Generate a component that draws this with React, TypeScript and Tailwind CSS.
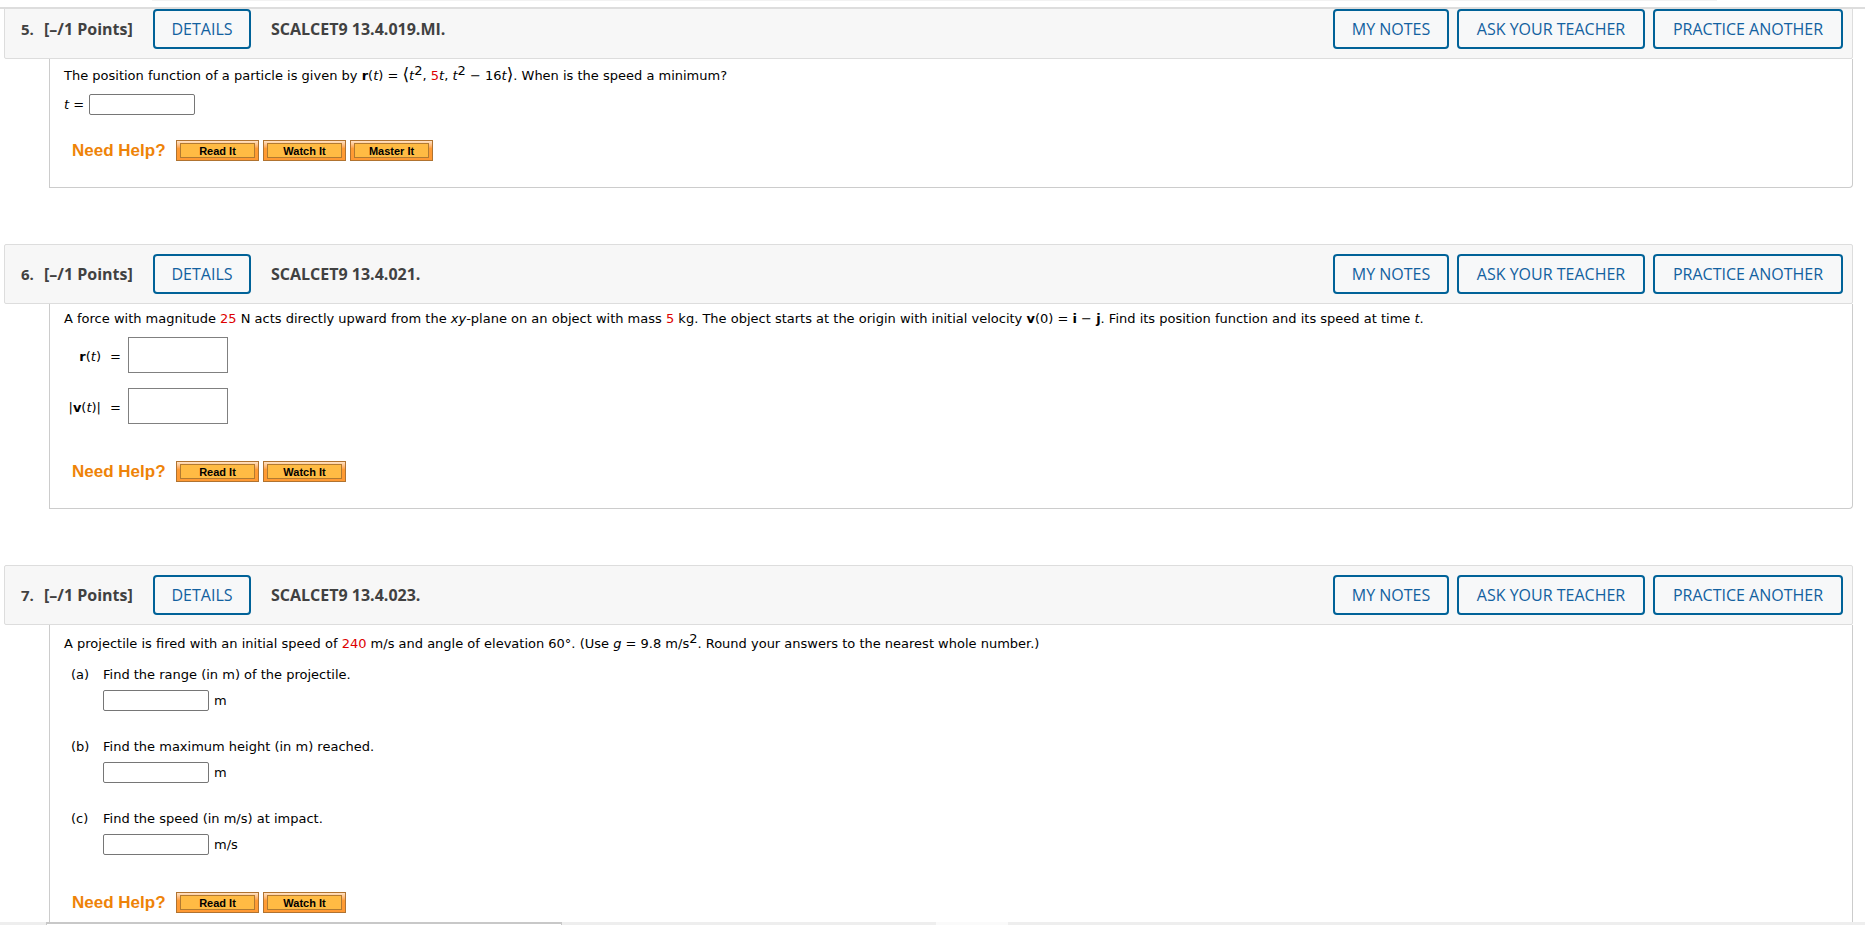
import type { ReactNode } from "react";
import clsx from "clsx";

const BODY_FONT = "font-['Verdana','DejaVu_Sans',sans-serif]";
const UI_FONT = "font-['Open_Sans','Noto_Sans',sans-serif]";

function OutlineButton({ className, children }: { className: string; children: ReactNode }) {
  return (
    <button
      type="button"
      className={clsx("h-10 rounded border-2 border-[#006298] bg-[#f7f8f9] text-[#1261a0] text-base font-medium whitespace-nowrap", className)}
    >
      {children}
    </button>
  );
}

function HelpButton({ children }: { children: ReactNode }) {
  return (
    <button
      type="button"
      className="w-[83px] h-[21px] px-[3px] py-[2px] border border-[#b07330] bg-linear-to-b from-[#ffe2c4] via-[#ff9c34] via-40% to-[#ff9933]"
    >
      <span className="flex items-center justify-center h-[15px] pt-px border border-[#b27a30] bg-[#ffbb44] text-[11px] leading-3 font-bold text-black font-['Liberation_Sans',Arial,sans-serif]">
        {children}
      </span>
    </button>
  );
}

function NeedHelp({ items }: { items: string[] }) {
  return (
    <div className="flex items-center gap-1 pl-2 pb-[26px]">
      <span className="w-[100px] text-[17px] leading-5 font-bold text-[#ee8308] font-['Liberation_Sans',Arial,sans-serif]">Need Help?</span>
      {items.map((item) => (
        <HelpButton key={item}>{item}</HelpButton>
      ))}
    </div>
  );
}

function AnswerInput({ label }: { label: string }) {
  return <input type="text" aria-label={label} className="w-[106px] h-[21px] px-0.5 rounded-[2px] border border-[#767676] bg-white" />;
}

function MathInput({ id }: { id: string }) {
  return <input id={id} type="text" className="w-[100px] h-9 px-1 border border-[#808080] bg-white" />;
}

function Rand({ children }: { children: ReactNode }) {
  return <span className="text-[#dd0000]">{children}</span>;
}

function Sup({ children }: { children: ReactNode }) {
  return <sup className="text-[13px] leading-none -top-[5px]">{children}</sup>;
}

function Angle({ children }: { children: ReactNode }) {
  return <span className="text-[17px] leading-none">{children}</span>;
}

function Question({ number, code, children }: { number: number; code: string; children: ReactNode }) {
  return (
    <section className="mb-14">
      <header className={clsx("flex items-center h-15 pl-4 pr-[9px] border border-[#dddddd] rounded-[2px] bg-[#f7f7f7] text-[#414141]", UI_FONT)}>
        <span className="w-[23px] text-[15px] font-bold">{number}.</span>
        <span className="w-[109px] text-base font-bold">[–/1 Points]</span>
        <OutlineButton className="w-[98px]">DETAILS</OutlineButton>
        <h2 className="ml-5 text-base font-bold">{code}</h2>
        <div className="flex gap-2 ml-auto">
          <OutlineButton className="w-[116px]">MY NOTES</OutlineButton>
          <OutlineButton className="w-[188px]">ASK YOUR TEACHER</OutlineButton>
          <OutlineButton className="w-[190px]">PRACTICE ANOTHER</OutlineButton>
        </div>
      </header>
      <div className={clsx("ml-[45px] pl-[14px] border border-t-0 border-[#cccccc] rounded-br text-[13px] leading-5 text-black", BODY_FONT)}>
        {children}
      </div>
    </section>
  );
}

const PARTS = [
  { key: "a", text: "Find the range (in m) of the projectile.", unit: "m" },
  { key: "b", text: "Find the maximum height (in m) reached.", unit: "m" },
  { key: "c", text: "Find the speed (in m/s) at impact.", unit: "m/s" },
];

export default function App() {
  return (
    <div className="flex flex-col h-screen overflow-hidden bg-white">
      <div className="shrink-0 h-[9px] border-b-2 border-[#dddddd]">
        <div className="h-px ml-[152px] mr-[148px] bg-[#f2f2f2]" />
      </div>

      <main className="flex-1 min-h-0 overflow-hidden pl-1 pr-3">
        <div className="-mt-2.5">
          <Question number={5} code="SCALCET9 13.4.019.MI.">
            <p className="pt-[7px]">
              The position function of a particle is given by <b>r</b>(<i>t</i>) = <Angle>⟨</Angle>
              <i>t</i>
              <Sup>2</Sup>, <Rand>5</Rand>
              <i>t</i>, <i>t</i>
              <Sup>2</Sup> − 16<i>t</i>
              <Angle>⟩</Angle>. When is the speed a minimum?
            </p>
            <div className="flex items-center gap-[5px] mt-2 mb-[25px]">
              <span><i>t</i> =</span>
              <AnswerInput label="t" />
            </div>
            <NeedHelp items={["Read It", "Watch It", "Master It"]} />
          </Question>

          <Question number={6} code="SCALCET9 13.4.021.">
            <p className="pt-[5px]">
              A force with magnitude <Rand>25</Rand> N acts directly upward from the <i>xy</i>-plane on an object with mass <Rand>5</Rand> kg. The object starts at the origin with initial velocity <b>v</b>(0) = <b>i</b> − <b>j</b>. Find its position function and its speed at time <i>t</i>.
            </p>
            <div className="grid grid-cols-[37px_27px_auto] items-center justify-start gap-y-[15px] mt-2 mb-[37px]">
              <label htmlFor="position" className="pt-1 text-right"><b>r</b>(<i>t</i>)</label>
              <span className="pt-1 pl-[9px]">=</span>
              <MathInput id="position" />
              <label htmlFor="speed" className="pt-1 text-right">|<b>v</b>(<i>t</i>)|</label>
              <span className="pt-1 pl-[9px]">=</span>
              <MathInput id="speed" />
            </div>
            <NeedHelp items={["Read It", "Watch It"]} />
          </Question>

          <Question number={7} code="SCALCET9 13.4.023.">
            <p className="pt-[9px]">
              A projectile is fired with an initial speed of <Rand>240</Rand> m/s and angle of elevation 60°. (Use <i>g</i> = 9.8 m/s<Sup>2</Sup>. Round your answers to the nearest whole number.)
            </p>
            <ol className="pl-[7px] mt-[11px] mb-[37px] flex flex-col gap-[26px]">
              {PARTS.map((part) => (
                <li key={part.key} className="flex">
                  <span className="w-8">({part.key})</span>
                  <div>
                    <p>{part.text}</p>
                    <div className="flex items-center gap-[5px] mt-[5px]">
                      <AnswerInput label={part.text} />
                      <span>{part.unit}</span>
                    </div>
                  </div>
                </li>
              ))}
            </ol>
            <NeedHelp items={["Read It", "Watch It"]} />
          </Question>
        </div>
      </main>

      <div className="shrink-0 flex h-[3px] bg-[#eeeeee]">
        <div className="ml-[46px] w-[516px] border border-t-2 border-b-0 border-[#c8c8c8] bg-white" />
        <div className="ml-[374px] w-[72px] bg-[#fafafa]" />
      </div>
    </div>
  );
}
